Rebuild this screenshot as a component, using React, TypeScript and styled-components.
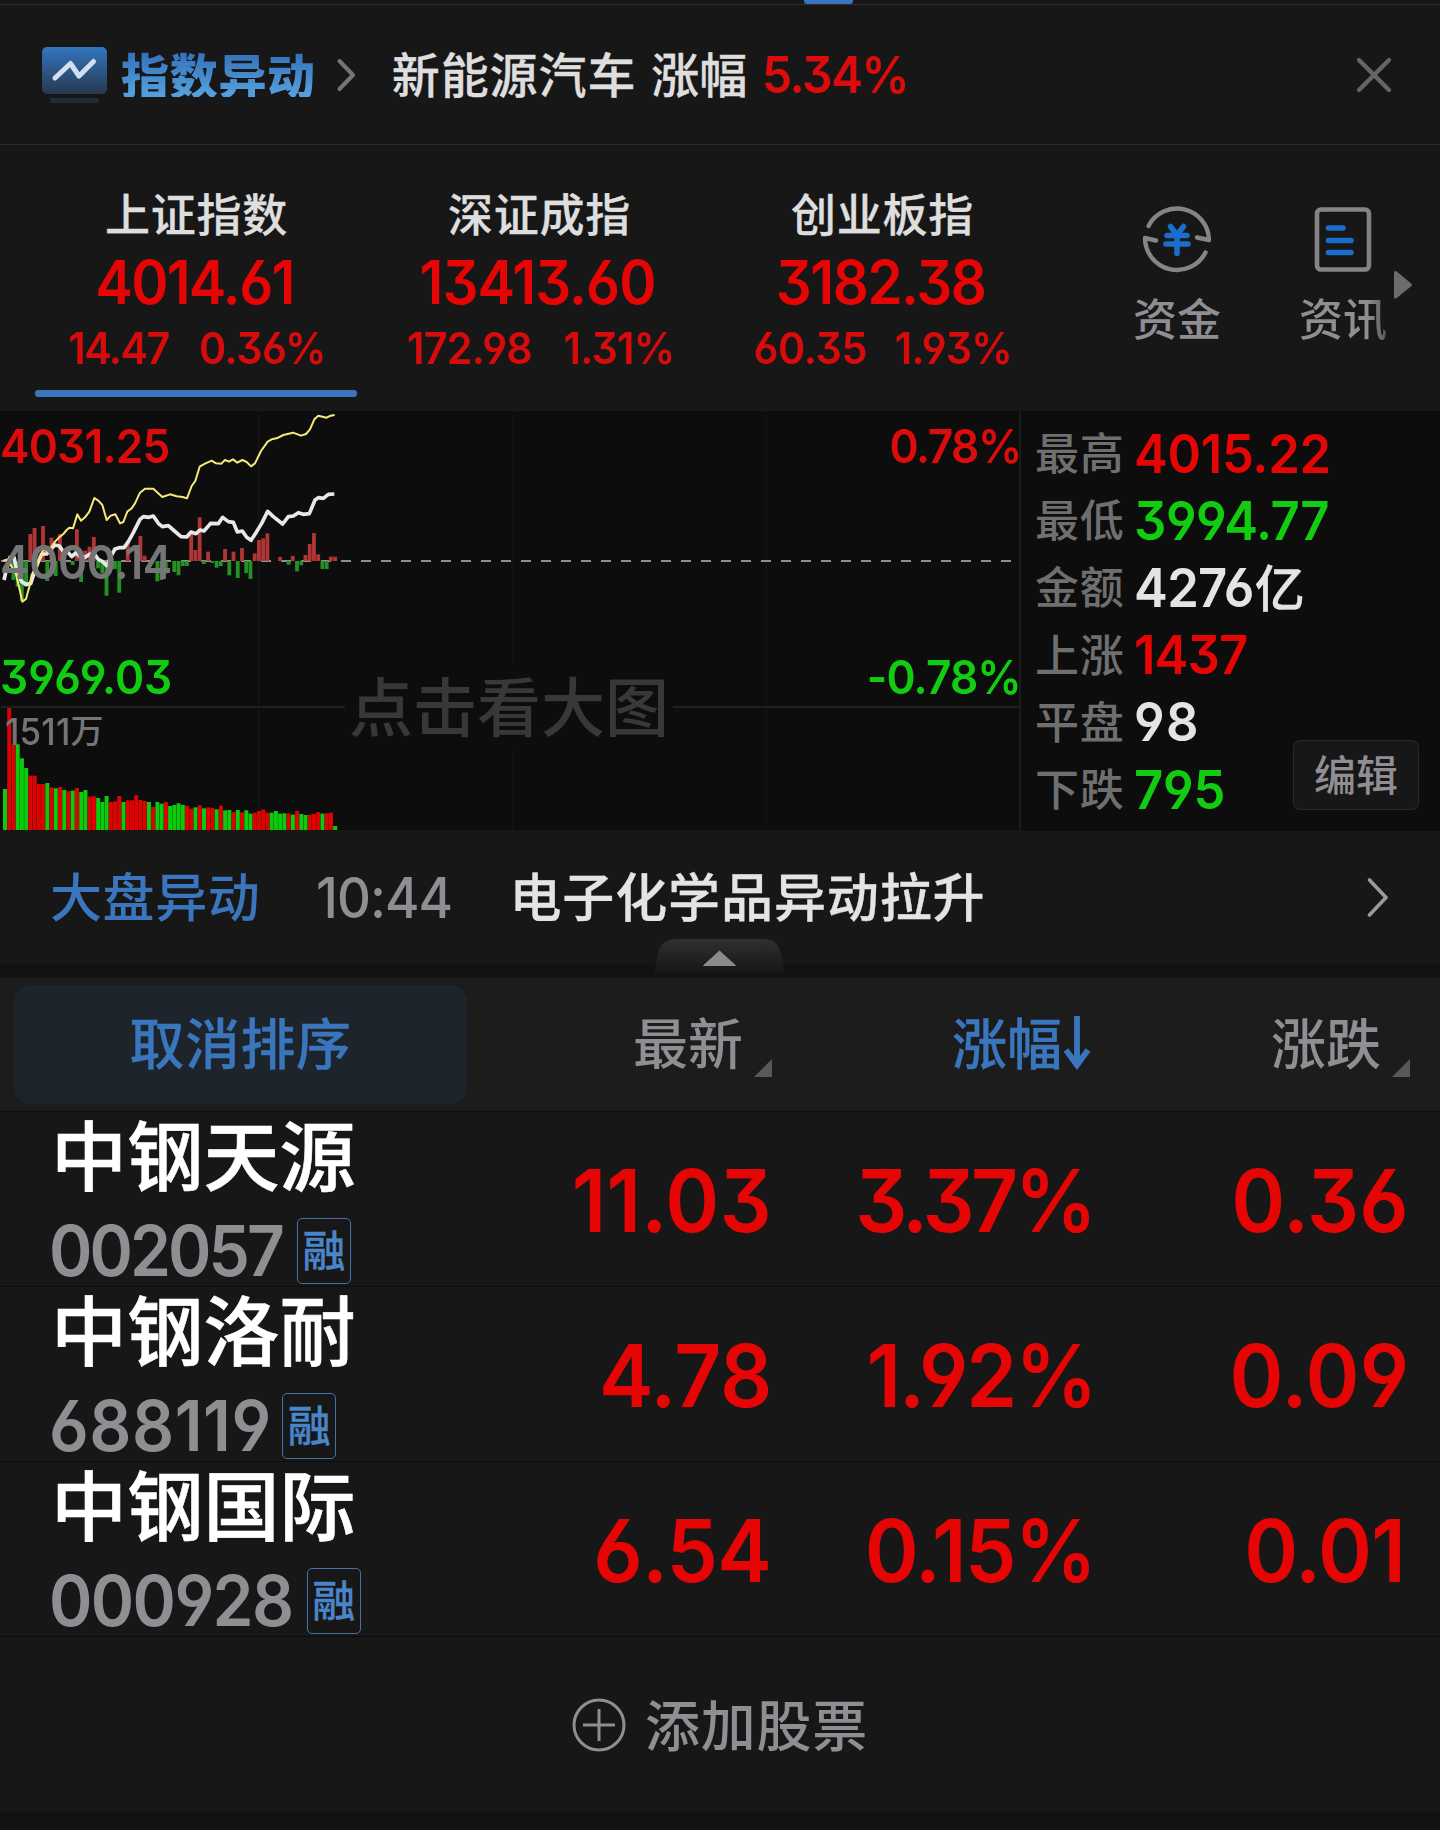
import React from "react";
import styled, { createGlobalStyle } from "styled-components";

const RED = "#e60505";
const GREEN = "#12cc12";
const BLUE = "#3a76bd";
const GREY = "#8e8e93";
const WHITE = "#e4e4e4";

const Global = createGlobalStyle`
  * { box-sizing: border-box; }
  html, body { margin: 0; padding: 0; background: #171717; }
  body { font-family: "Noto Sans CJK SC", sans-serif; }
`;

const Screen = styled.main`
  width: 1440px;
  height: 1830px;
  overflow: hidden;
  background: #171717;
  display: flex;
  flex-direction: column;
`;

const Label = styled.span<{ $size: number; $color?: string; $weight?: number; $ls?: number; $stroke?: number }>`
  display: block;
  font-family: "Noto Sans CJK SC", sans-serif;
  font-size: ${(p) => p.$size}px;
  line-height: 1;
  font-weight: ${(p) => p.$weight ?? 500};
  letter-spacing: ${(p) => p.$ls ?? 0}px;
  color: ${(p) => p.$color ?? WHITE};
  -webkit-text-stroke: ${(p) => p.$stroke ?? 0}px currentColor;
  white-space: nowrap;
`;

/* Figures are set slightly condensed, anchored on the side they align to. */
const Num = styled.span<{
  $size: number;
  $color?: string;
  $weight?: number;
  $ls?: number;
  $anchor?: "left" | "center" | "right";
}>`
  display: block;
  font-family: Inter, "Noto Sans CJK SC", sans-serif;
  font-feature-settings: "cv03", "cv04", "cv09";
  font-size: ${(p) => p.$size}px;
  line-height: 1;
  font-weight: ${(p) => p.$weight ?? 560};
  letter-spacing: ${(p) => p.$ls ?? 0}px;
  margin-right: ${(p) => -(p.$ls ?? 0)}px;
  transform: scaleX(0.94);
  transform-origin: ${(p) => p.$anchor ?? "left"} center;
  color: ${(p) => p.$color ?? RED};
  white-space: nowrap;
`;

/* top edge */
const TabEdge = styled.div`
  height: 5px;
  flex: none;
  padding-left: 804px;
  border-bottom: 1px solid #303030;
`;
const TabMark = styled.div`
  width: 49px;
  height: 4px;
  border-radius: 0 0 3px 3px;
  background: ${BLUE};
`;

/* alert banner */
const Banner = styled.header`
  height: 140px;
  flex: none;
  display: flex;
  align-items: center;
  padding: 0 47px 0 42px;
  border-bottom: 1px solid #2c2c2c;
`;
const BannerTitle = styled(Label)`
  margin-left: 14px;
  margin-bottom: 4px;
  background: linear-gradient(180deg, #3472bc 10%, #55a0dc 95%);
  background-clip: text;
  -webkit-background-clip: text;
  color: transparent;
`;
const BannerArrow = styled.svg`
  margin-left: 20px;
`;
const BannerText = styled.div`
  display: flex;
  align-items: center;
  margin-left: 34px;
  gap: 15px;
  flex: 1;
`;
const BannerWord = styled(Label)`
  margin-bottom: 5px;
`;

/* indices */
const Indices = styled.section`
  height: 266px;
  flex: none;
  display: flex;
  padding-left: 25px;
`;
const IndexCard = styled.div`
  width: 343px;
  display: flex;
  flex-direction: column;
  align-items: center;
  padding-top: 45px;
`;
const IndexValue = styled.div`
  margin-top: 17px;
  margin-right: 3px;
  height: 60px;
`;
const IndexChange = styled.div<{ $gap: number }>`
  display: flex;
  gap: ${(p) => p.$gap}px;
  margin-top: 14px;
  margin-left: 2px;
  height: 45px;
`;
const Underline = styled.div`
  width: 322px;
  height: 7px;
  margin: 19px 2px 0 0;
  border-radius: 3px;
  background: ${BLUE};
`;
const Shortcuts = styled.div`
  display: flex;
  padding: 59px 0 0 79px;
  gap: 78px;
`;
const Shortcut = styled.div<{ $fade?: boolean }>`
  display: flex;
  flex-direction: column;
  align-items: center;
  gap: 21px;
  width: 88px;
  ${(p) => p.$fade && "mask-image: linear-gradient(90deg, #000 78%, rgba(0,0,0,.55));"}
`;
const MoreArrow = styled.svg`
  margin: 125px 0 0 6px;
  flex: none;
`;

/* chart */
const Market = styled.section`
  height: 420px;
  flex: none;
  display: flex;
  background: #0d0d0d;
`;
const ChartPane = styled.div`
  position: relative;
  width: 1021px;
  flex: none;
  border-right: 2px solid #1b1b1b;
  border-bottom: 1px solid #151515;
`;
const ChartSvg = styled.svg`
  display: block;
`;
const Watermark = styled.div`
  position: absolute;
  left: 345px;
  top: 252px;
  width: 328px;
  height: 87px;
  background: #0d0d0d;
  display: flex;
  align-items: center;
  justify-content: center;
  padding-bottom: 8px;
`;
const Scale = styled.div<{ $top: number; $right?: boolean }>`
  position: absolute;
  top: ${(p) => p.$top}px;
  ${(p) => (p.$right ? "right: -3px;" : "left: 0;")}
`;
const VolumeScale = styled.div`
  position: absolute;
  left: 5px;
  top: 302px;
  display: flex;
`;
const VolumeUnit = styled(Label)`
  margin-left: -4px;
`;
const Stats = styled.div`
  flex: 1;
  min-width: 0;
  display: flex;
  justify-content: space-between;
  padding: 8px 21px 0 14px;
`;
const StatList = styled.div`
  flex: 0 0 250px;
  min-width: 0;
  display: flex;
  flex-direction: column;
`;
const Stat = styled.div`
  height: 67.2px;
  display: flex;
  align-items: center;
  gap: 9px;
`;
const StatLabel = styled(Label)`
  margin-bottom: 3px;
`;
const StatValue = styled.div`
  display: flex;
  align-items: center;
  padding-top: 2px;
`;
const StatUnit = styled(Label)`
  margin: 0 0 5px -7px;
`;
const EditButton = styled.button`
  align-self: flex-end;
  flex: none;
  width: 126px;
  height: 70px;
  margin-bottom: 21px;
  padding: 0 0 4px;
  display: flex;
  align-items: center;
  justify-content: center;
  border: 1px solid #2a2a2a;
  border-radius: 7px;
  background: #171717;
`;

/* market flash */
const Flash = styled.section`
  position: relative;
  height: 133px;
  flex: none;
  display: flex;
  align-items: center;
  padding: 0 50px 0 50px;
`;
const FlashLabel = styled(Label)`
  margin-bottom: 5px;
`;
const FlashTime = styled.div`
  margin-left: 56px;
  width: 133px;
`;
const FlashText = styled.div`
  margin-left: 60px;
  flex: 1;
`;
const Handle = styled.svg`
  position: absolute;
  left: 654px;
  bottom: -10px;
`;
const Strip = styled.div<{ $h: number }>`
  height: ${(p) => p.$h}px;
  flex: none;
  background: #121212;
`;

/* watch list */
const columns = "467px 305px 319px 319px";
const TableHead = styled.div`
  display: grid;
  grid-template-columns: ${columns};
  height: 134px;
  flex: none;
  background: #1c1c1c;
  border-bottom: 1px solid #0d0d0d;
`;
const ClearSort = styled.button`
  margin: 7px 0 7px 14px;
  height: 119px;
  padding: 0 0 8px;
  display: flex;
  align-items: center;
  justify-content: center;
  border: 0;
  border-radius: 17px;
  background: #1d242c;
`;
const HeadCell = styled.div<{ $gap: number }>`
  display: flex;
  justify-content: flex-end;
  align-items: center;
  gap: ${(p) => p.$gap}px;
  padding-bottom: 9px;
`;
const SortCorner = styled.svg`
  margin-top: 55px;
`;
const SortArrow = styled.svg`
  margin-top: 6px;
`;
const Row = styled.div`
  display: grid;
  grid-template-columns: ${columns};
  height: 175px;
  flex: none;
  border-bottom: 1px solid #0d0d0d;
`;
const Stock = styled.div`
  padding: 2px 0 0 49px;
`;
const StockName = styled(Label)`
  margin-left: 2px;
`;
const CodeLine = styled.div`
  display: flex;
  align-items: center;
  margin-top: 27px;
  height: 68px;
`;
const Badge = styled.span`
  width: 54px;
  height: 66px;
  margin-left: -3px;
  display: flex;
  align-items: center;
  justify-content: center;
  padding-bottom: 5px;
  border: 1px solid #4373a6;
  border-radius: 5px;
`;
const Cell = styled.div<{ $shift?: number }>`
  display: flex;
  justify-content: flex-end;
  align-items: center;
  padding-top: 3px;
  margin-right: ${(p) => -(p.$shift ?? 0)}px;
`;
const AddStock = styled.div`
  height: 175px;
  flex: none;
  display: flex;
  align-items: center;
  justify-content: center;
  gap: 19px;
`;
const AddLabel = styled(Label)`
  margin-bottom: 4px;
`;

type Figure = { text: string; ls: number };
const f = (text: string, ls: number): Figure => ({ text, ls });

const indices = [
  { name: "上证指数", value: f("4014.61", -1.8), diff: f("14.47", -1.6), pct: f("0.36%", -0.6), gap: 21, active: true },
  { name: "深证成指", value: f("13413.60", -1), diff: f("172.98", -0.8), pct: f("1.31%", -0.9), gap: 23 },
  { name: "创业板指", value: f("3182.38", -1.5), diff: f("60.35", -0.5), pct: f("1.93%", -0.9), gap: 20 },
];

const stats = [
  { label: "最高", value: f("4015.22", -0.3), color: RED },
  { label: "最低", value: f("3994.77", -0.5), color: GREEN },
  { label: "金额", value: f("4276", -0.7), unit: "亿", color: WHITE },
  { label: "上涨", value: f("1437", -0.9), color: RED },
  { label: "平盘", value: f("98", 1.5), color: WHITE },
  { label: "下跌", value: f("795", -0.2), color: GREEN },
];

const stocks = [
  { name: "中钢天源", code: f("002057", -3.1), price: f("11.03", 0.2), pct: f("3.37%", -3.8), diff: f("0.36", 0) },
  { name: "中钢洛耐", code: f("688119", 0.6), price: f("4.78", -0.4), pct: f("1.92%", -2.2), diff: f("0.09", 0.3) },
  { name: "中钢国际", code: f("000928", -1.7), price: f("6.54", -0.8), pct: f("0.15%", -1.7), diff: f("0.01", -0.9), inset: 4 },
];

/* Chart data is stored at three units per pixel, measured from 33 units above the pane. */
const volume =
  "1167g,924r,1033r,1033g,1075g,1104g,1127r,1127r,1152r,1152r,1149g,1162r,1165g,1161r,1170g,1174r,1172g,1164r,1176g,1170g,1190r,1189r,1194g,1206g,1188g,1206r,1204r,1188r,1206g,1201r,1201r,1186r,1200r,1203r,1206g,1221r,1206g,1211g,1206r,1218g,1215g,1210g,1215g,1218r,1226r,1222g,1216r,1225g,1222r,1224r,1228g,1217r,1231g,1230g,1236r,1230g,1237r,1231g,1241g,1238r,1233r,1229r,1238r,1238g,1233g,1241g,1240g,1240r,1244g,1233r,1242g,1245g,1244r,1242r,1236r,1241g,1240r,1238r,1278g"
    .split(",")
    .map((s) => ({ y: parseInt(s, 10), up: s.endsWith("r") }));

const momentum: [number, number][] = [
  [1, 500], [2, 540], [3, 560], [4, 603], [5, 560], [6, 402], [7, 384], [9, 378], [10, 543], [11, 413], [12, 528],
  [13, 402], [16, 495], [17, 388], [18, 546], [19, 452], [20, 440], [21, 411], [22, 505], [23, 520], [24, 587],
  [26, 507], [27, 578], [29, 430], [32, 408], [33, 467], [36, 544], [37, 540], [38, 520], [40, 516], [41, 526],
  [42, 498], [43, 498], [44, 400], [45, 450], [46, 352], [47, 492], [48, 455], [49, 489], [50, 503], [51, 498],
  [52, 447], [53, 526], [54, 455], [55, 534], [56, 444], [57, 519], [58, 537], [59, 460], [60, 420], [61, 415],
  [62, 400], [65, 471], [67, 494], [68, 468], [69, 514], [70, 496], [71, 465], [72, 432], [73, 399], [74, 463],
  [75, 507], [76, 507], [77, 470], [78, 470],
];

const leadLine =
  "10,482 25,478 35,500 47,520 57,560 67,605 78,597 88,560 95,525 105,505 118,480 130,448 142,455 155,440 165,425 178,412 190,402 200,390 208,383 219,385 232,343 243,362 255,352 268,335 283,294 295,302 307,315 320,360 332,347 346,343 360,370 370,366 382,335 395,325 405,310 420,278 435,266 460,266 473,278 487,291 510,283 530,289 548,291 561,295 575,258 586,243 599,200 615,191 635,182 648,190 664,191 675,180 687,185 699,178 712,188 727,180 740,186 753,199 765,190 783,153 803,125 815,118 830,115 850,105 879,98 903,107 918,102 930,88 943,58 955,47 980,53 992,47 1004,45";

const indexLine =
  "12,540 20,505 30,472 42,472 50,510 65,545 78,553 92,551 102,520 115,485 125,462 140,462 152,448 165,435 178,438 190,455 205,458 215,470 228,458 240,470 255,472 270,462 283,462 295,478 308,485 320,497 332,470 345,447 358,443 372,443 385,425 400,398 420,358 430,350 447,352 460,348 475,370 487,380 505,377 520,390 543,410 560,411 573,396 588,401 600,390 612,393 632,370 655,371 668,352 685,365 700,367 712,396 727,393 740,412 753,421 768,398 785,370 803,334 820,350 848,372 865,350 880,348 895,338 910,343 928,341 945,300 955,293 970,295 985,283 1003,282";

const STEP = 12.7;

function Chart() {
  return (
    <ChartSvg width="1019" height="419" viewBox="0 0 1019 419">
      {[258.7, 512.8, 766.3].map((x) => (
        <line key={x} x1={x} x2={x} y1="4" y2="418" stroke="#222222" strokeWidth="1" strokeDasharray="1 1" />
      ))}
      <line x1="1" x2="1019" y1="296" y2="296" stroke="#202020" strokeWidth="2" />
      <line x1="1" x2="1011" y1="150" y2="150" stroke="#8f8f8f" strokeWidth="2" strokeDasharray="10 10" />
      <g transform="scale(0.33333) translate(0 -33)">
        {momentum.map(([i, y]) => (
          <rect
            key={i}
            x={9 + i * STEP}
            width="11.5"
            y={Math.min(y, 483)}
            height={Math.abs(y - 483)}
            fill={y < 483 ? "#b23535" : "#259025"}
          />
        ))}
        {volume.map((v, i) => (
          <rect key={i} x={9 + i * STEP} width="12" y={v.y} height={1290 - v.y} fill={v.up ? "#dd0303" : "#0ccb0c"} />
        ))}
        <polyline points={indexLine} fill="none" stroke="#e8e8e8" strokeWidth="11" strokeLinejoin="round" />
        <polyline points={leadLine} fill="none" stroke="#f5ea78" strokeWidth="6" strokeLinejoin="round" />
      </g>
    </ChartSvg>
  );
}

function FundIcon() {
  return (
    <svg width="70" height="70" viewBox="0 0 70 70" fill="none">
      <g stroke="#858585" strokeWidth="4.4" strokeLinecap="round" strokeLinejoin="round">
        <path d="M6.5 22 A32 32 0 0 1 67 36 L55 33.5" />
        <path d="M63.5 48.5 A32 32 0 0 1 3 34 L14 36.5" />
      </g>
      <g stroke="#1a6dcb" strokeWidth="5.6" strokeLinecap="round">
        <path d="M28.5 22.5 L35 31 L41.5 22.5" />
        <path d="M25 31.5 H45 M24 40 H46 M35 31 V49.5" />
      </g>
    </svg>
  );
}

function NewsIcon() {
  return (
    <svg width="58" height="70" viewBox="0 0 58 70" fill="none">
      <rect x="3" y="5.5" width="52" height="60" rx="4" stroke="#858585" strokeWidth="4.6" />
      <path d="M14.5 24 H29 M14.5 36.5 H37 M14.5 48.5 H37" stroke="#1a6dcb" strokeWidth="5.6" strokeLinecap="round" />
    </svg>
  );
}

function Corner() {
  return (
    <SortCorner width="18" height="18" viewBox="0 0 18 18">
      <path d="M18 0 V18 H0 Z" fill="#58585a" />
    </SortCorner>
  );
}

export default function App() {
  return (
    <>
      <Global />
      <Screen>
        <TabEdge>
          <TabMark />
        </TabEdge>

        <Banner>
          <svg width="65" height="58" viewBox="0 0 65 58" fill="none">
            <defs>
              <linearGradient id="logo" x1="0" y1="0" x2="0" y2="1">
                <stop offset="0" stopColor="#3375c0" />
                <stop offset="1" stopColor="#263850" />
              </linearGradient>
            </defs>
            <rect x="0" y="1" width="65" height="47" rx="5" fill="url(#logo)" />
            <rect x="8" y="52" width="49" height="5" rx="2.5" fill="#222c38" />
            <path d="M13 32 L28.5 17.5 L37 30 L51.5 15.5" stroke="#d3dff0" strokeWidth="5" strokeLinecap="round" strokeLinejoin="round" />
          </svg>
          <BannerTitle $size={48} $weight={900} $ls={0.7}>指数异动</BannerTitle>
          <BannerArrow width="22" height="34" viewBox="0 0 22 34" fill="none">
            <path d="M3.5 3 L17 17 L3.5 31" stroke="#747474" strokeWidth="4" strokeLinecap="round" strokeLinejoin="round" />
          </BannerArrow>
          <BannerText>
            <BannerWord $size={48} $ls={0.9} $color="#dedede" $stroke={0.3}>新能源汽车</BannerWord>
            <BannerWord $size={48} $color="#dedede" $stroke={0.3}>涨幅</BannerWord>
            <Num $size={51} $ls={-1.6} $color="#dc0c0c">5.34%</Num>
          </BannerText>
          <svg width="38" height="38" viewBox="0 0 38 38" fill="none">
            <path d="M4 4 L34 34 M34 4 L4 34" stroke="#656565" strokeWidth="4.4" strokeLinecap="round" />
          </svg>
        </Banner>

        <Indices>
          {indices.map((x) => (
            <IndexCard key={x.name}>
              <Label $size={45} $ls={0.7} $color="#dedede" $stroke={0.3}>{x.name}</Label>
              <IndexValue>
                <Num $size={60} $weight={630} $ls={x.value.ls} $anchor="center">{x.value.text}</Num>
              </IndexValue>
              <IndexChange $gap={x.gap}>
                <Num $size={44} $ls={x.diff.ls} $anchor="center" $color="#d60b0b">{x.diff.text}</Num>
                <Num $size={44} $ls={x.pct.ls} $anchor="center" $color="#d60b0b">{x.pct.text}</Num>
              </IndexChange>
              {x.active && <Underline />}
            </IndexCard>
          ))}
          <Shortcuts>
            <Shortcut>
              <FundIcon />
              <Label $size={44} $color={GREY}>资金</Label>
            </Shortcut>
            <Shortcut $fade>
              <NewsIcon />
              <Label $size={44} $color={GREY}>资讯</Label>
            </Shortcut>
          </Shortcuts>
          <MoreArrow width="20" height="30" viewBox="0 0 20 30">
            <path d="M2.5 2.5 V27 L17.5 14.8 Z" fill="#6c6c6c" stroke="#6c6c6c" strokeWidth="3" strokeLinejoin="round" />
          </MoreArrow>
        </Indices>

        <Market>
          <ChartPane>
            <Chart />
            <Watermark>
              <Label $size={64} $color="#383838">点击看大图</Label>
            </Watermark>
            <Scale $top={11}>
              <Num $size={47} $ls={-0.8} $color="#dc0c0c">4031.25</Num>
            </Scale>
            <Scale $top={127}>
              <Num $size={47} $ls={-0.3} $color="#757575">4000.14</Num>
            </Scale>
            <Scale $top={242}>
              <Num $size={47} $ls={0} $color={GREEN}>3969.03</Num>
            </Scale>
            <Scale $top={11} $right>
              <Num $size={47} $ls={-1.5} $anchor="right" $color="#dc0c0c">0.78%</Num>
            </Scale>
            <Scale $top={242} $right>
              <Num $size={47} $ls={-0.9} $anchor="right" $color={GREEN}>-0.78%</Num>
            </Scale>
            <VolumeScale>
              <Num $size={37} $weight={500} $ls={0.2} $color="#757575">1511</Num>
              <VolumeUnit $size={33} $color="#757575">万</VolumeUnit>
            </VolumeScale>
          </ChartPane>
          <Stats>
            <StatList>
              {stats.map((s) => (
                <Stat key={s.label}>
                  <StatLabel $size={44} $ls={0.8} $color="#6f6f6f">{s.label}</StatLabel>
                  <StatValue>
                    <Num $size={54} $ls={s.value.ls} $color={s.color} $weight={600}>{s.value.text}</Num>
                    {s.unit && <StatUnit $size={50} $color={s.color} $stroke={0.4}>{s.unit}</StatUnit>}
                  </StatValue>
                </Stat>
              ))}
            </StatList>
            <EditButton>
              <Label $size={42} $color={GREY}>编辑</Label>
            </EditButton>
          </Stats>
        </Market>

        <Flash>
          <FlashLabel $size={52} $ls={0.6} $color={BLUE}>大盘异动</FlashLabel>
          <FlashTime>
            <Num $size={56} $weight={490} $ls={-1} $color={GREY}>10:44</Num>
          </FlashTime>
          <FlashText>
            <FlashLabel $size={52} $ls={0.9} $stroke={0.3}>电子化学品异动拉升</FlashLabel>
          </FlashText>
          <svg width="24" height="40" viewBox="0 0 24 40" fill="none">
            <path d="M3.5 2 L20 19.5 L3.5 37" stroke="#9a9a9a" strokeWidth="3.6" strokeLinecap="round" strokeLinejoin="round" />
          </svg>
          <Handle width="131" height="35" viewBox="0 0 131 35">
            <defs>
              <linearGradient id="grip" x1="0" y1="0" x2="0" y2="1">
                <stop offset="0" stopColor="#303030" />
                <stop offset="1" stopColor="#151515" />
              </linearGradient>
            </defs>
            <path d="M0 35 L4 15 Q7 0 22 0 H109 Q124 0 127 15 L131 35 Z" fill="url(#grip)" />
            <path d="M65.5 12 L81.5 26.500 H49.5 Z" fill="#8b8b8b" stroke="#8b8b8b" strokeLinejoin="round" />
          </Handle>
        </Flash>
        <Strip $h={14} />

        <TableHead>
          <ClearSort>
            <Label $size={55} $ls={0.5} $color={BLUE} $stroke={0.3}>取消排序</Label>
          </ClearSort>
          <HeadCell $gap={11}>
            <Label $size={55} $color={GREY}>最新</Label>
            <Corner />
          </HeadCell>
          <HeadCell $gap={1}>
            <Label $size={55} $color={BLUE} $stroke={0.3}>涨幅</Label>
            <SortArrow width="28" height="56" viewBox="0 0 28 56" fill="none">
              <path d="M14 1 V49 M3 35 L14 50 L25 35" stroke={BLUE} strokeWidth="5.8" />
            </SortArrow>
          </HeadCell>
          <HeadCell $gap={11}>
            <Label $size={55} $color={GREY}>涨跌</Label>
            <Corner />
          </HeadCell>
        </TableHead>

        {stocks.map((s) => (
          <Row key={s.code.text}>
            <Stock>
              <StockName $size={76} $ls={0.2} $color="#ffffff" $stroke={0.6}>{s.name}</StockName>
              <CodeLine>
                <Num $size={70} $ls={s.code.ls} $color={GREY}>{s.code.text}</Num>
                <Badge>
                  <Label $size={43} $color="#4a85c9" $stroke={0.3}>融</Label>
                </Badge>
              </CodeLine>
            </Stock>
            <Cell>
              <Num $size={87} $ls={s.price.ls} $anchor="right">{s.price.text}</Num>
            </Cell>
            <Cell $shift={6}>
              <Num $size={87} $ls={s.pct.ls} $anchor="right">{s.pct.text}</Num>
            </Cell>
            <Cell $shift={s.inset ? -s.inset : -1}>
              <Num $size={87} $ls={s.diff.ls} $anchor="right">{s.diff.text}</Num>
            </Cell>
          </Row>
        ))}

        <AddStock>
          <svg width="54" height="54" viewBox="0 0 54 54" fill="none" stroke={GREY} strokeWidth="3">
            <circle cx="27" cy="27" r="25" />
            <path d="M11 27 H43 M27 11 V43" />
          </svg>
          <AddLabel $size={55} $ls={0.7} $color={GREY}>添加股票</AddLabel>
        </AddStock>
        <Strip $h={18} />
      </Screen>
    </>
  );
}
